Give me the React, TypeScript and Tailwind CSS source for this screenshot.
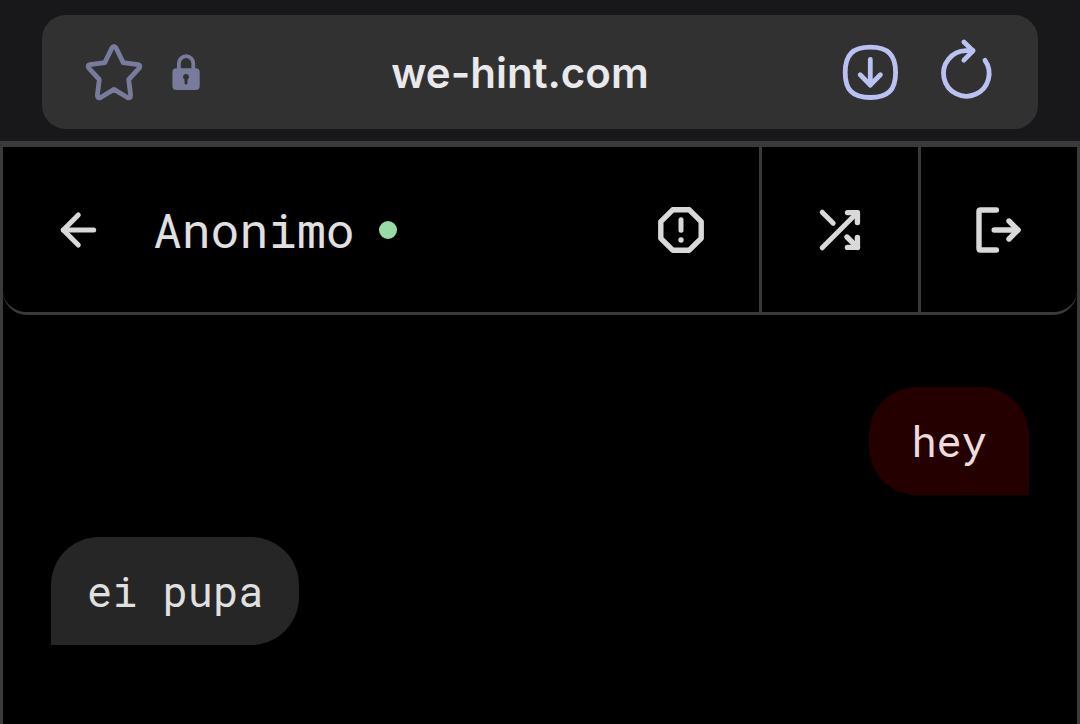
import React from 'react';

interface Message {
  id: number;
  text: string;
  mine: boolean;
}

const messages: Message[] = [
  { id: 1, text: 'hey', mine: true },
  { id: 2, text: 'ei pupa', mine: false },
];

interface IconProps {
  className: string;
  viewBox: string;
  strokeWidth?: number;
  children: React.ReactNode;
}

function Icon({ className, viewBox, strokeWidth = 5.4, children }: IconProps) {
  return (
    <svg
      className={className}
      viewBox={viewBox}
      fill="none"
      stroke="currentColor"
      strokeWidth={strokeWidth}
      strokeLinecap="round"
      strokeLinejoin="round"
      aria-hidden="true"
    >
      {children}
    </svg>
  );
}

function BrowserBar() {
  return (
    <div className="bg-[#18181a] px-[42px] pt-[15px] pb-3">
      <div className="flex h-[114px] items-center justify-between rounded-3xl bg-[#313131] px-[42px]">
        <div className="flex items-center gap-7 text-[#787b9b]">
          <button type="button" aria-label="Bookmark">
            <Icon className="block size-[60px]" viewBox="0 0 60 60" strokeWidth={4.8}>
              <path d="M28 5.8 L20.8 20.6 L5.9 22.6 Q2.9 23.4 4.8 26.2 L15.3 37.5 L13.4 53 Q13.4 57 16.6 55.5 L30 47.4 L43.4 55.5 Q46.6 57 46.6 53 L44.7 37.5 L55.2 26.2 Q57.1 23.4 54.1 22.6 L39.2 20.6 L32 5.8 Q30 2.8 28 5.8Z" />
            </Icon>
          </button>
          <button type="button" aria-label="Site security">
            <Icon className="block h-10 w-7" viewBox="0 0 28 40" strokeWidth={3.8}>
              <path d="M6.9 18V11.4a7.2 7.2 0 0 1 14.4 0V18" />
              <rect x="0.4" y="16.3" width="27.3" height="21.8" rx="4" fill="currentColor" stroke="none" />
              <circle cx="14" cy="24.8" r="2.9" fill="#313131" stroke="none" />
              <path d="M14 25V31" stroke="#313131" strokeWidth="3" />
            </Icon>
          </button>
        </div>

        <button type="button" className="pt-0.5 font-['Inter',sans-serif] text-[42px] leading-[60px] font-semibold text-[#e9e9eb]">
          we-hint.com
        </button>

        <div className="flex items-center gap-9 text-[#bac2f3]">
          <button type="button" aria-label="Download">
            <Icon className="block size-[60px]" viewBox="0 0 60 60" strokeWidth={4.8}>
              <path d="M30.3 5.2C48 5.2 55.6 12.8 55.6 30.4S48 55.5 30.3 55.5 5.2 48 5.2 30.4 12.6 5.2 30.3 5.2Z" />
              <path d="M30.3 17.5V43" />
              <path d="M20.2 32.8L30.3 43L40.4 32.8" />
            </Icon>
          </button>
          <button type="button" aria-label="Reload">
            <Icon className="block size-[60px] overflow-visible" viewBox="0 0 60 60" strokeWidth={4.8}>
              <path d="M49 18.3A22.8 22.8 0 1 1 30 8.6H37" />
              <path d="M27.9 0L37 8.8L27.9 18.2" />
            </Icon>
          </button>
        </div>
      </div>
    </div>
  );
}

function ChatHeader() {
  return (
    <header className="flex h-[168px] rounded-b-3xl border-b-[3px] border-[#3a3a3a] text-[#d9d9d9]">
      <div className="flex flex-1 items-center px-[51px]">
        <button type="button" aria-label="Back" className="mr-[51px]">
          <Icon className="block size-12" viewBox="0 0 48 48" strokeWidth={5}>
            <path d="M9.3 24H39.7" />
            <path d="M24.3 8.9L9.3 24L24.3 39.1" />
          </Icon>
        </button>
        <h1 className="font-['Roboto_Mono','DejaVu_Sans_Mono',monospace] text-5xl text-[#e0e0e0]">Anonimo</h1>
        <span className="ml-6 size-[18px] rounded-full bg-[#99dba5]" role="img" aria-label="Online" />
        <button type="button" aria-label="Report" className="ml-auto">
          <Icon className="block size-[54px]" viewBox="0 0 54 54">
            <path d="M18.7 6.8H35.3L47.2 18.7V35.3L35.3 47.2H18.7L6.8 35.3V18.7Z" />
            <path d="M27 16.8V27.2" strokeWidth="5" />
            <circle cx="27" cy="37" r="2.7" fill="currentColor" stroke="none" />
          </Icon>
        </button>
      </div>
      <button type="button" aria-label="New chat" className="flex w-[159px] items-center justify-center border-l-[3px] border-[#3a3a3a]">
        <Icon className="block size-[54px]" viewBox="0 0 54 54">
          <path d="M9.2 9.2L20.2 20.2" strokeWidth="5" />
          <path d="M9.2 44.8L44.4 9.6" strokeWidth="5" />
          <path d="M34.5 9.6H44.4V19.6" />
          <path d="M34 34L44.4 44.4" />
          <path d="M34.5 44.4H44.4V34.4" />
        </Icon>
      </button>
      <button type="button" aria-label="Leave" className="flex w-[159px] items-center justify-center border-l-[3px] border-[#3a3a3a]">
        <Icon className="block size-[54px]" viewBox="0 0 54 54">
          <path d="M24.4 7H8.5Q7 7 7 8.5V45.5Q7 47 8.5 47H24.4" />
          <path d="M22.2 27H45.8" />
          <path d="M37 18L46 27L37 36" />
        </Icon>
      </button>
    </header>
  );
}

function MessageBubble({ message }: { message: Message }) {
  return (
    <li
      className={`py-6 rounded-t-[48px] ${
        message.mine
          ? 'self-end rounded-bl-[48px] bg-[#250000] px-[42px] text-[#ecdcdc]'
          : 'self-start rounded-br-[48px] bg-[#262626] px-9 text-[#e0e0e0]'
      }`}
    >
      {message.text}
    </li>
  );
}

export default function App() {
  return (
    <div className="flex min-h-screen flex-col bg-black">
      <BrowserBar />
      <main className="flex-1 border-x-[3px] border-t-[6px] border-[#3a3a3a]">
        <ChatHeader />
        <ul className="flex flex-col gap-[42px] px-12 pt-[72px] font-['Roboto_Mono','DejaVu_Sans_Mono',monospace] text-[42px] leading-[60px]">
          {messages.map((message) => (
            <MessageBubble key={message.id} message={message} />
          ))}
        </ul>
      </main>
    </div>
  );
}
